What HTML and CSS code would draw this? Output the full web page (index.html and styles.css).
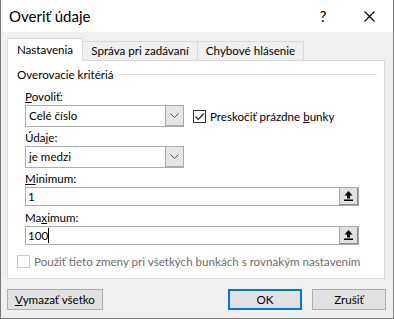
FILE: index.html
```html
<!DOCTYPE html>
<html lang="sk">
<head>
    <meta charset="UTF-8">
    <title>Overiť údaje</title>
    <link rel="stylesheet" href="styles.css">
</head>
<body>
    <div class="window">
        <div class="titlebar">
            <span class="title">Overiť údaje</span>
            <span class="caption-btn help">?</span>
            <span class="caption-btn close">
                <svg width="11" height="11" viewBox="0 0 11 11"><path d="M0.5 0.5L10.5 10.5M10.5 0.5L0.5 10.5" stroke="#000" stroke-width="1.1"/></svg>
            </span>
        </div>

        <div class="tabs">
            <div class="tab active">Nastavenia</div>
            <div class="tab tab-msg">Správa pri zadávaní</div>
            <div class="tab tab-err">Chybové hlásenie</div>
        </div>

        <div class="panel">
            <div class="group-title">
                <span>Overovacie kritériá</span>
                <div class="group-line"></div>
            </div>

            <div class="field-label first"><u>P</u>ovoliť:</div>
            <div class="row">
                <div class="combo">
                    <span class="combo-value">Celé číslo</span>
                    <span class="combo-btn">
                        <svg width="9" height="5" viewBox="0 0 9 5"><path d="M0.5 0.5L4.5 4.5L8.5 0.5" fill="none" stroke="#555" stroke-width="1"/></svg>
                    </span>
                </div>
                <label class="check">
                    <span class="box">
                        <svg width="11" height="11" viewBox="0 0 11 11"><path d="M1.5 5.5L4.3 8.3L9.8 2.5" fill="none" stroke="#222" stroke-width="1.2"/></svg>
                    </span>
                    <span>Preskočiť prázdne <u>b</u>unky</span>
                </label>
            </div>

            <div class="field-label">Úda<u>j</u>e:</div>
            <div class="combo">
                <span class="combo-value">je medzi</span>
                <span class="combo-btn">
                    <svg width="9" height="5" viewBox="0 0 9 5"><path d="M0.5 0.5L4.5 4.5L8.5 0.5" fill="none" stroke="#555" stroke-width="1"/></svg>
                </span>
            </div>

            <div class="field-label"><u>M</u>inimum:</div>
            <div class="ref-input">
                <span class="ref-value">1</span>
                <span class="ref-btn">
                    <svg width="9" height="10" viewBox="0 0 9 10"><path d="M4.5 0L8.5 4.5H6V7.5H3V4.5H0.5Z" fill="#000"/><rect x="0" y="8.5" width="9" height="1.5" fill="#000"/></svg>
                </span>
            </div>

            <div class="field-label second-input">Ma<u>x</u>imum:</div>
            <div class="ref-input">
                <span class="ref-value">100<span class="caret"></span></span>
                <span class="ref-btn">
                    <svg width="9" height="10" viewBox="0 0 9 10"><path d="M4.5 0L8.5 4.5H6V7.5H3V4.5H0.5Z" fill="#000"/><rect x="0" y="8.5" width="9" height="1.5" fill="#000"/></svg>
                </span>
            </div>

            <label class="check disabled">
                <span class="box"></span>
                <span>Použiť tieto zmeny pri všetkých bunkách s rovnakým nastavením</span>
            </label>
        </div>

        <div class="footer">
            <button class="btn btn-clear"><u>V</u>ymazať všetko</button>
            <div class="footer-right">
                <button class="btn default">OK</button>
                <button class="btn">Zrušiť</button>
            </div>
        </div>
    </div>
</body>
</html>
```

FILE: styles.css
```css
body {
    margin: 0;
    font-family: 'Lato', sans-serif;
    font-size: 11.6px;
    color: #000;
}
.window {
    width: 394px;
    height: 319px;
    box-sizing: border-box;
    background-color: #f0f0f0;
    border: 1px solid #7a7a7a;
    border-top: none;
}
.titlebar {
    height: 32px;
    background-color: #fff;
    display: flex;
    align-items: center;
}
.title {
    font-size: 15px;
    margin-left: 8px;
    flex: 1;
}
.caption-btn {
    width: 46px;
    height: 32px;
    display: flex;
    align-items: center;
    justify-content: center;
}
.help {
    font-size: 15px;
}
.close {
    margin-right: 1px;
}
.tabs {
    display: flex;
    align-items: flex-end;
    margin-top: 6px;
    padding-left: 6px;
    height: 22px;
    position: relative;
    z-index: 1;
}
.tab {
    height: 19px;
    line-height: 18px;
    text-align: center;
    border: 1px solid #d9d9d9;
    border-bottom: none;
    border-left: none;
    box-sizing: border-box;
    background-color: #f0f0f0;
}
.tab.active {
    width: 76px;
    height: 23px;
    line-height: 22px;
    margin-bottom: -1px;
    background-color: #fff;
    border-left: 1px solid #d9d9d9;
}
.tab-msg {
    width: 115px;
}
.tab-err {
    width: 106px;
}
.panel {
    margin-left: 6px;
    width: 378px;
    height: 219px;
    box-sizing: border-box;
    background-color: #fff;
    border: 1px solid #d9d9d9;
    padding: 5px 0 0 9px;
}
.group-title {
    display: flex;
    align-items: center;
    height: 16px;
}
.group-line {
    flex: 1;
    height: 1px;
    background-color: #dcdcdc;
    margin: 1px 7px 0 5px;
}
.field-label {
    margin: 3px 0 0 8px;
    height: 16px;
    line-height: 16px;
}
.field-label.first {
    margin-top: 7px;
}
.field-label.second-input {
    margin-top: 4px;
}
.row {
    display: flex;
    align-items: center;
}
.combo {
    margin-left: 8px;
    width: 159px;
    height: 22px;
    box-sizing: border-box;
    border: 1px solid #acacac;
    display: flex;
    background-color: #fff;
}
.combo-value {
    flex: 1;
    line-height: 20px;
    padding-left: 3px;
}
.combo-btn {
    width: 17px;
    background-color: #e5e5e5;
    border-left: 1px solid #acacac;
    border-bottom: 1px solid #acacac;
    display: flex;
    align-items: center;
    justify-content: center;
}
.check {
    display: flex;
    align-items: center;
    gap: 4px;
    margin-left: 9px;
}
.box {
    width: 13px;
    height: 13px;
    box-sizing: border-box;
    border: 1px solid #333;
    display: flex;
    align-items: center;
    justify-content: center;
    background-color: #fff;
}
.check.disabled {
    color: #6d6d6d;
    margin: 10px 0 0 0;
}
.check.disabled .box {
    border-color: #cccccc;
}
.ref-input {
    margin-left: 8px;
    width: 334px;
    height: 19px;
    box-sizing: border-box;
    border: 1px solid #acacac;
    display: flex;
}
.ref-value {
    flex: 1;
    padding-left: 2px;
    display: flex;
    align-items: center;
}
.caret {
    display: inline-block;
    width: 1px;
    height: 15px;
    background-color: #000;
}
.ref-btn {
    width: 17px;
    background-color: #e1e1e1;
    border-left: 1px solid #acacac;
    border-bottom: 1px solid #8a8a8a;
    border-right: 1px solid #8a8a8a;
    display: flex;
    align-items: center;
    justify-content: center;
}
.footer {
    display: flex;
    justify-content: space-between;
    padding: 10px 7px 0 6px;
}
.footer-right {
    display: flex;
    gap: 10px;
}
.btn {
    font-family: 'Lato', sans-serif;
    font-size: 11.6px;
    height: 21px;
    width: 74px;
    padding: 0;
    background-color: #e1e1e1;
    border: 1px solid #adadad;
    color: #000;
    box-sizing: border-box;
}
.btn-clear {
    width: 96px;
}
.btn.default {
    border: 2px solid #0078d7;
}
```
